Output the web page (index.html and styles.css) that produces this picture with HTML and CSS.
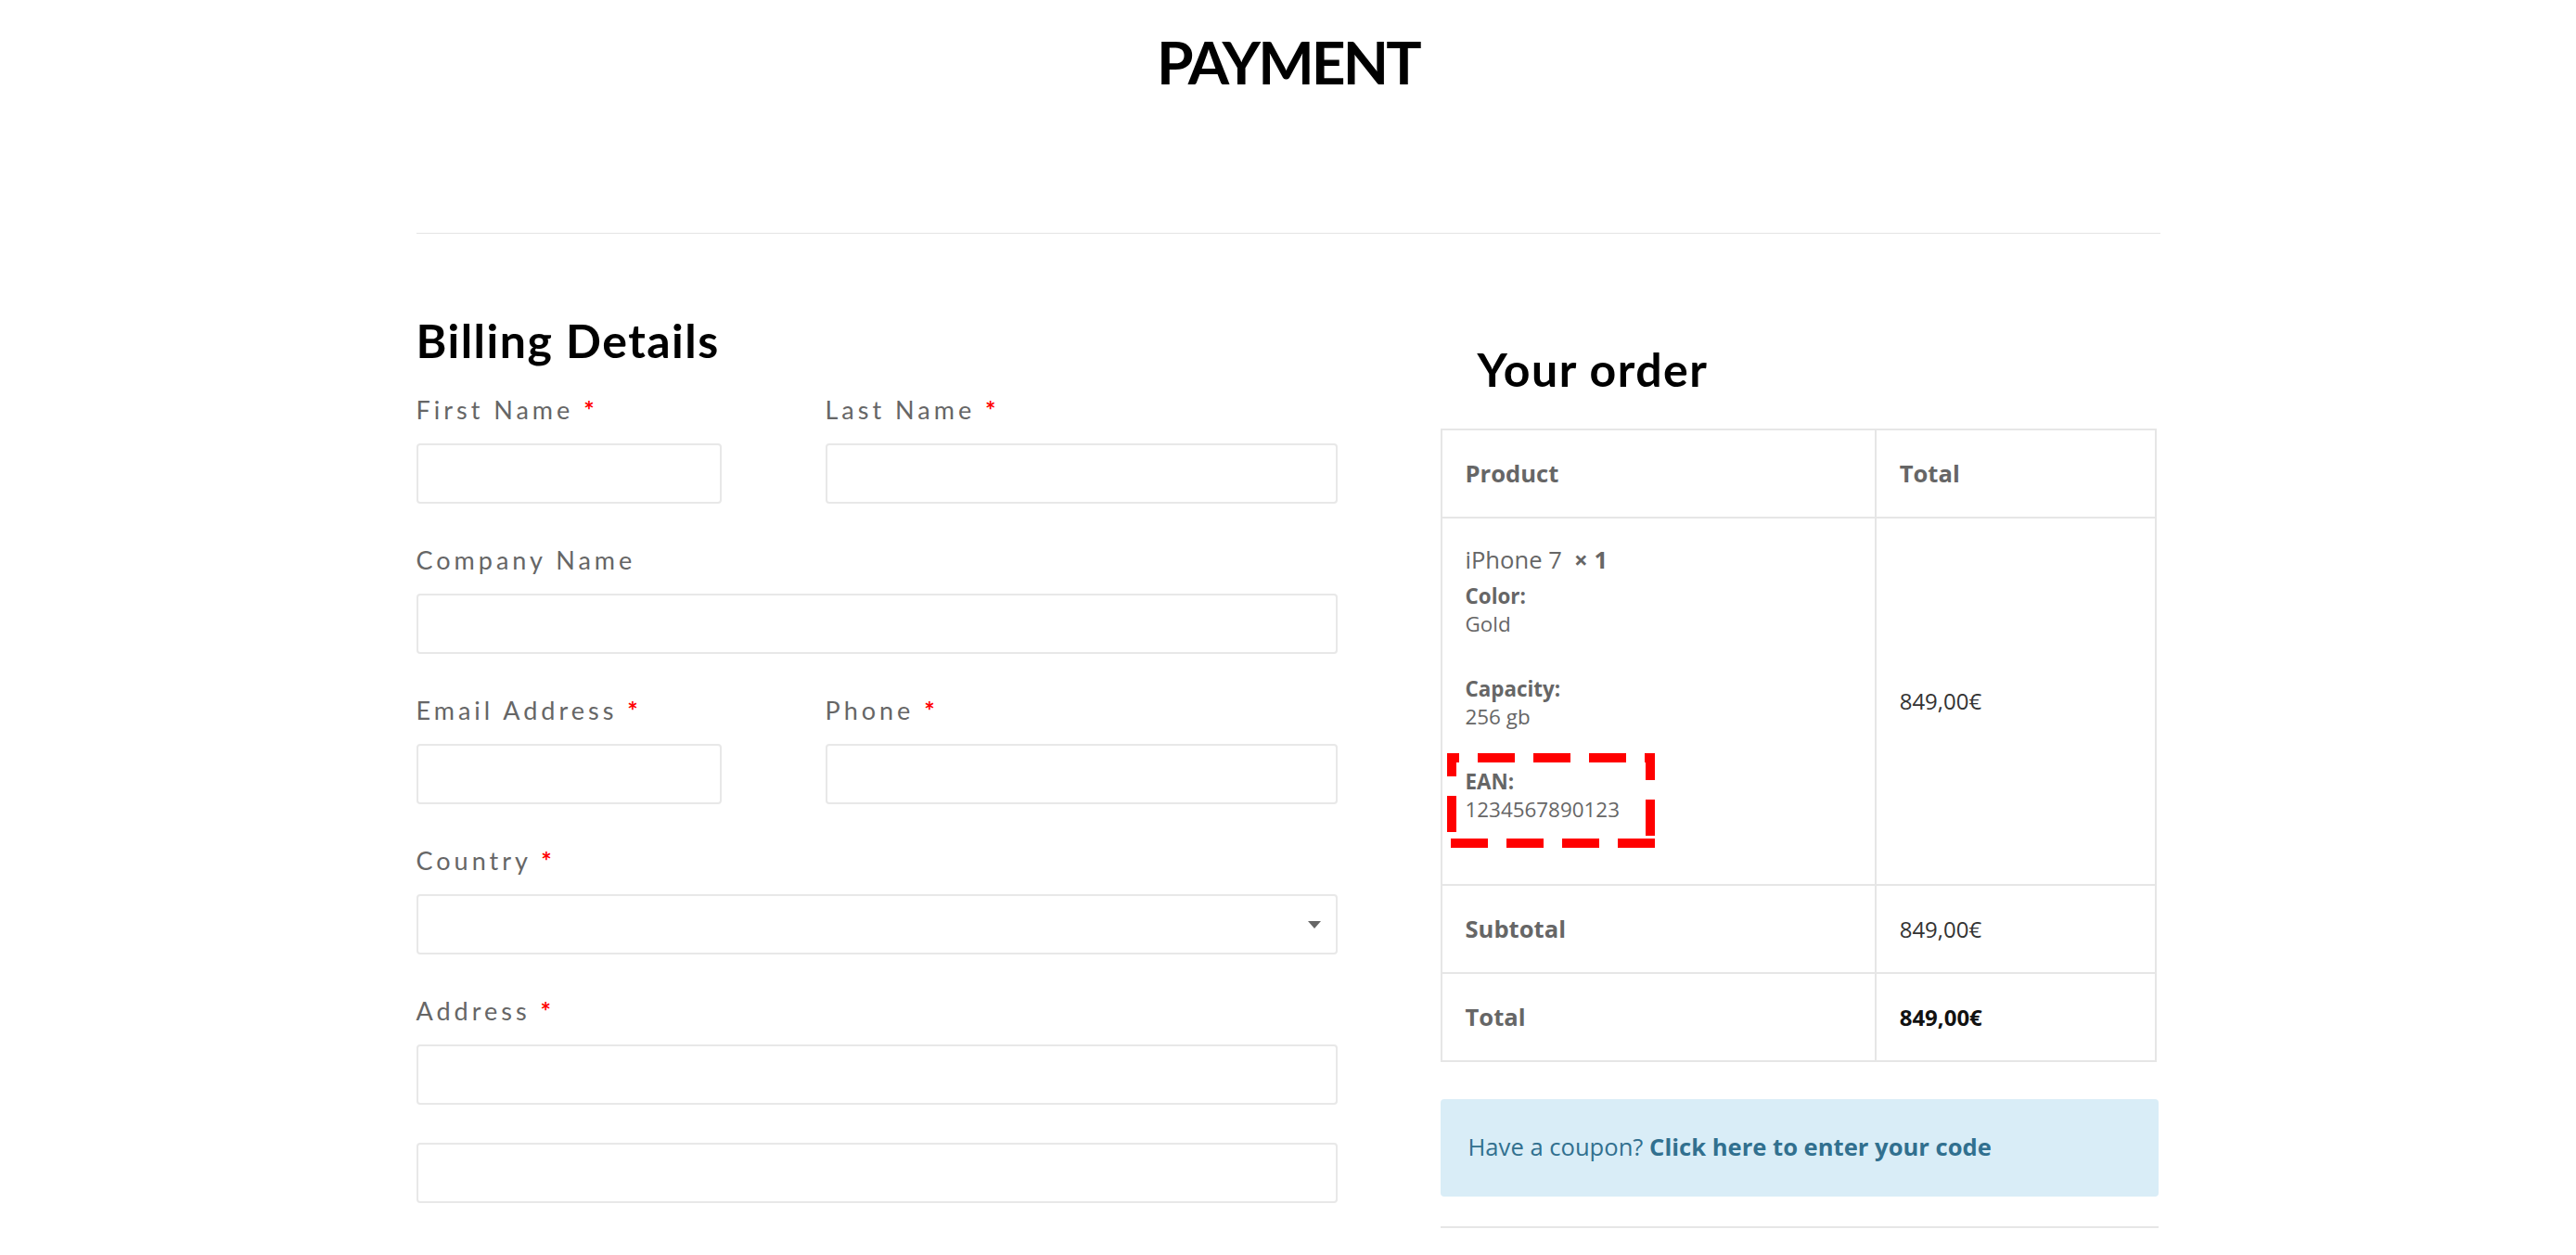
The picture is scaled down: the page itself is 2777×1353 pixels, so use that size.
FILE: index.html
```html
<!DOCTYPE html>
<html lang="en">
<head>
  <meta charset="UTF-8">
  <meta name="viewport" content="width=device-width, initial-scale=1.0">
  <title>Payment</title>
  <link rel="stylesheet" href="styles.css">
</head>
<body>
  <h1 class="page-title">PAYMENT</h1>
  <hr class="page-rule">

  <div class="checkout">
    <form class="billing">
      <h3 class="section-title">Billing Details</h3>
      <div class="fields">
        <div class="field-row">
          <div class="field">
            <label>First Name <abbr class="required">*</abbr></label>
            <input type="text" class="input-text">
          </div>
          <div class="field">
            <label>Last Name <abbr class="required">*</abbr></label>
            <input type="text" class="input-text">
          </div>
        </div>
        <div class="field">
          <label>Company Name</label>
          <input type="text" class="input-text">
        </div>
        <div class="field-row">
          <div class="field">
            <label>Email Address <abbr class="required">*</abbr></label>
            <input type="email" class="input-text">
          </div>
          <div class="field">
            <label>Phone <abbr class="required">*</abbr></label>
            <input type="tel" class="input-text">
          </div>
        </div>
        <div class="field">
          <label>Country <abbr class="required">*</abbr></label>
          <div class="select-wrap">
            <select class="input-select"><option></option></select>
          </div>
        </div>
        <div class="field">
          <label>Address <abbr class="required">*</abbr></label>
          <input type="text" class="input-text">
          <input type="text" class="input-text address-2">
        </div>
      </div>
    </form>

    <div class="order">
      <h3 class="section-title">Your order</h3>
      <table class="order-table">
        <thead>
          <tr>
            <th class="col-product">Product</th>
            <th>Total</th>
          </tr>
        </thead>
        <tbody>
          <tr class="cart-item">
            <td class="product-name">iPhone 7&nbsp; <strong class="qty">×&nbsp;1</strong>
              <dl class="variation">
                <div class="meta-group">
                  <dt>Color:</dt>
                  <dd>Gold</dd>
                </div>
                <div class="meta-group">
                  <dt>Capacity:</dt>
                  <dd>256 gb</dd>
                </div>
                <div class="meta-group ean">
                  <dt>EAN:</dt>
                  <dd>1234567890123</dd>
                  <svg class="ean-mark" width="224" height="102" viewBox="0 0 224 102">
                    <g fill="#ff0000">
                      <rect x="0" y="0" width="13" height="10"/>
                      <rect x="33" y="0" width="40" height="10"/>
                      <rect x="93" y="0" width="40" height="10"/>
                      <rect x="153" y="0" width="40" height="10"/>
                      <rect x="213" y="0" width="11" height="10"/>
                      <rect x="0" y="0" width="10" height="25"/>
                      <rect x="0" y="46" width="10" height="39"/>
                      <rect x="214" y="0" width="10" height="29"/>
                      <rect x="214" y="50" width="10" height="39"/>
                      <rect x="4" y="92" width="40" height="10"/>
                      <rect x="64" y="92" width="40" height="10"/>
                      <rect x="124" y="92" width="40" height="10"/>
                      <rect x="184" y="92" width="40" height="10"/>
                    </g>
                  </svg>
                </div>
              </dl>
            </td>
            <td class="amount">849,00€</td>
          </tr>
        </tbody>
        <tfoot>
          <tr>
            <th>Subtotal</th>
            <td class="amount">849,00€</td>
          </tr>
          <tr class="order-total">
            <th>Total</th>
            <td class="amount"><strong>849,00€</strong></td>
          </tr>
        </tfoot>
      </table>

      <div class="coupon-info">Have a coupon? <a href="#">Click here to enter your code</a></div>
      <hr class="order-rule">
    </div>
  </div>
</body>
</html>
```

FILE: styles.css
```css
body { margin: 0; font-family: "Open Sans", sans-serif; color: #666; background-color: #fff; }

/* ヘッダー */
.page-title { margin: 27px 0 0; font: 700 64px/80px Lato, sans-serif; letter-spacing: -2.8px; text-align: center; color: #000; }
.page-rule { width: 1880px; margin: 144px auto 0; border: 0; border-top: 1px solid #e5e5e5; }

.checkout { width: 1880px; margin: 0 auto; padding-top: 85px; display: grid; grid-template-columns: 993px 774px; justify-content: space-between; align-items: start; }
.section-title { margin: 0; font: 700 50px/60px Lato, sans-serif; letter-spacing: 1.5px; color: #000; }

/* 請求先フォーム */
.fields { margin-top: 29px; }
.field-row { display: grid; grid-template-columns: 329px 1fr; column-gap: 112px; }
.field { margin-bottom: 45px; }
.field label { display: block; margin-bottom: 20px; font: 400 27px/32px Lato, sans-serif; letter-spacing: 4px; color: #666; }
.required { color: #f00; font-weight: 700; text-decoration: none; letter-spacing: 0; border: 0; }
.input-text, .input-select { display: block; width: 100%; height: 65px; box-sizing: border-box; border: 2px solid #e8e8e8; border-radius: 4px; background-color: #fff; font: 24px "Open Sans", sans-serif; }
.address-2 { margin-top: 41px; }
.input-select { appearance: none; -webkit-appearance: none; }
.select-wrap { position: relative; }
.select-wrap::after { content: ""; position: absolute; right: 18px; top: 50%; margin-top: -4px; border-left: 7.5px solid transparent; border-right: 7.5px solid transparent; border-top: 8px solid #666; }

/* 注文内容 */
.order { margin-left: -2px; width: 774px; }
.order .section-title { margin: 31px 0 34px; padding-left: 40px; }
.order-table { width: 772px; border-collapse: collapse; border: 2px solid #e6e6e6; }
.order-table th, .order-table td { padding: 27.5px 25px; border: 2px solid #e6e6e6; text-align: left; vertical-align: middle; font-size: 25.6px; line-height: 38px; }
.order-table th { font-weight: 700; color: #666; }
.col-product { width: 60.8%; }
.order-table .product-name { padding: 26px 25px 25px; color: #666; }
.qty { font-weight: 700; }
.order-table .amount { font-size: 24px; color: #333; }
.order-total .amount strong { color: #111; }

.variation { margin: 5px 0 0; font-size: 22.4px; line-height: 30px; }
.variation dt { font-weight: 700; }
.variation dd { margin: 0 0 40px; }
.meta-group { position: relative; }
.ean-mark { position: absolute; left: -20px; top: -16px; }

.coupon-info { margin-top: 40px; padding: 34px 30px 35px; border-radius: 4px; background-color: #d9edf7; color: #31708f; font-size: 25.6px; line-height: 36px; }
.coupon-info a { color: #31708f; font-weight: 700; text-decoration: none; }
.order-rule { margin: 32px 0 0; border: 0; border-top: 2px solid #e6e6e6; }
```
